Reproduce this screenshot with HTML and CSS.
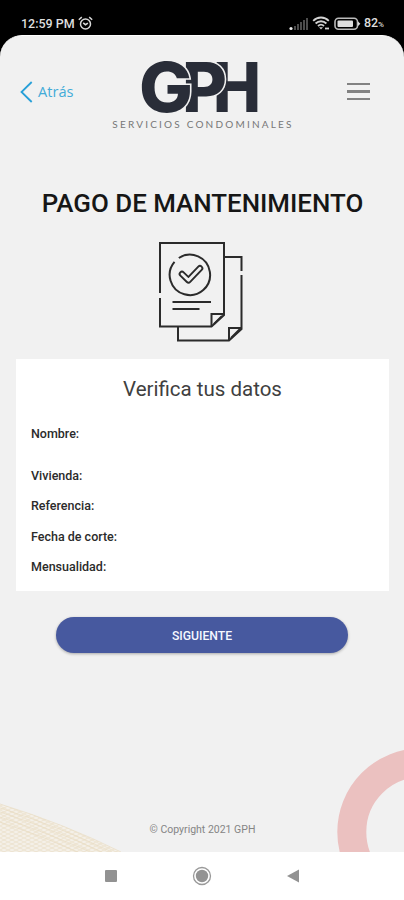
FILE: index.html
```
<!DOCTYPE html>
<html lang="es">

<head>
    <meta charset="UTF-8" />
    <meta name="viewport" content="width=device-width, initial-scale=1.0" />
    <title>GPH - Pago de mantenimiento</title>
    <link rel="stylesheet" href="styles.css">
</head>

<body>
    <div class="status-bar">
        <div class="status-left">
            <span class="time">12:59 PM</span>
            <svg width="15" height="15" viewBox="0 0 15 15" fill="none" stroke="#d8d8d8" stroke-width="1.5">
                <circle cx="7.5" cy="8" r="5" />
                <path d="M5.2 6.8l2.3 1.9 2.4-1.6M.8 3.7l3-2.6M14.2 3.7l-3-2.6" />
            </svg>
        </div>
        <div class="status-right">
            <svg width="20" height="14" viewBox="0 0 20 14">
                <path fill="#4c4c4c" d="M5 9h2v4H5zM8 7h2v6H8zM11 5h2v8h-2zM14 3h2v10h-2zM17 1h2v12h-2z" />
                <circle cx="2" cy="11.5" r="1.6" fill="#eee" />
            </svg>
            <svg width="19" height="15" viewBox="0 0 19 15" fill="none" stroke="#d2d2d2" stroke-width="1.8">
                <path d="M1.2 4.8c4.3-4.4 11.3-4.4 15.6 0M3.6 7.5c3-3 7.8-3 10.8 0M6 10c1.8-1.7 4.2-1.7 6 0" />
                <path d="M7 11.2h4l-2 2.3z" fill="#d2d2d2" stroke="none" />
                <path d="M13 12.5h4" />
            </svg>
            <svg width="27" height="14" viewBox="0 0 27 14">
                <rect x="1" y="1.2" width="22.5" height="11" rx="3.5" fill="none" stroke="#bbb" stroke-width="1.6" />
                <rect x="3.5" y="3.5" width="15.5" height="6.5" rx="1" fill="#dedede" />
                <path d="M24 4.5l2.4 2.3L24 9z" fill="#ddd" />
            </svg>
            <span class="battery">82<small>%</small></span>
        </div>
    </div>

    <div class="app">
        <header>
            <a class="back" href="#">
                <svg width="13" height="22" viewBox="0 0 13 22" fill="none" stroke="#29a0d8" stroke-width="1.8">
                    <path d="M11.7 1L1.5 11l10.2 10" />
                </svg>
                <span>Atrás</span>
            </a>
            <div class="logo">
                <svg width="122" height="55" viewBox="0 0 122 55">
                    <text class="logo-letter" x="74" y="51" textLength="48" lengthAdjust="spacingAndGlyphs">H</text>
                    <text class="logo-letter outlined" x="43" y="51" textLength="45" lengthAdjust="spacingAndGlyphs">P</text>
                    <text class="logo-letter outlined" x="0" y="51" textLength="54" lengthAdjust="spacingAndGlyphs">G</text>
                </svg>
                <div class="logo-caption">SERVICIOS CONDOMINALES</div>
            </div>
            <button class="menu" aria-label="Menú">
                <span></span>
                <span></span>
                <span></span>
            </button>
        </header>

        <main>
            <h1>PAGO DE MANTENIMIENTO</h1>

            <svg class="docs" width="88" height="102" viewBox="0 0 88 102" fill="none" stroke="#2b2b2b" stroke-width="2">
                <path d="M2 52V2h64V74L53.5 85.5H2V57" />
                <path d="M66 73H53.5v12.5M56 83l8-8" />
                <path d="M66 16h17.5V30M83.5 34V88L71 99.5H20V86" />
                <path d="M83.5 87H71v12.5M73 97l9-9" />
                <path d="M20.8 17A20.2 20.2 0 1 1 16.5 20.8" />
                <!-- hollow check mark -->
                <g stroke-linecap="round" stroke-linejoin="round">
                    <path d="M24 33l6.5 6.3 11.5-12" stroke-width="6.6" />
                    <path d="M24 33l6.5 6.3 11.5-12" stroke="#f1f1f1" stroke-width="2.8" />
                </g>
                <path d="M14.5 61H53M14.5 68H41.5" />
            </svg>

            <section class="card">
                <h2>Verifica tus datos</h2>
                <dl>
                    <dt class="name">Nombre:</dt>
                    <dt>Vivienda:</dt>
                    <dt>Referencia:</dt>
                    <dt>Fecha de corte:</dt>
                    <dt>Mensualidad:</dt>
                </dl>
            </section>

            <button class="next">SIGUIENTE</button>
        </main>

        <!-- Background decoration -->
        <svg class="deco-lines" width="122" height="50" viewBox="0 0 122 50" fill="none" stroke="#e8dabf" stroke-width=".6">
            <defs>
                <pattern id="mesh" width="8" height="4" patternUnits="userSpaceOnUse">
                    <rect width="8" height="4" fill="#f4f0e8" stroke="none" />
                    <path d="M0 0l8 4M0 4l8-4" />
                </pattern>
            </defs>
            <path d="M0 2Q65 22 121 50H0z" fill="url(#mesh)" stroke="none" />
            <path d="M0 2Q65 22 121 50M0 6Q60 25 112 50M0 10Q55 28 102 50M0 15Q48 31 90 50M0 20Q40 33 78 50" />
        </svg>
        <svg class="deco-ring" width="67" height="102" viewBox="0 0 67 102">
            <circle cx="84" cy="82" r="69.2" fill="none" stroke="#ebc1c0" stroke-width="29" />
        </svg>

        <footer>© Copyright 2021 GPH</footer>
    </div>

    <nav class="system-nav">
        <svg width="14" height="14" viewBox="0 0 14 14">
            <rect x="1" y="1" width="12" height="12" rx="1" fill="#929292" />
        </svg>
        <svg width="20" height="20" viewBox="0 0 20 20">
            <circle cx="10" cy="10" r="8.5" fill="none" stroke="#999" stroke-width="1.3" />
            <circle cx="10" cy="10" r="6.2" fill="#939393" />
        </svg>
        <svg width="14" height="14" viewBox="0 0 14 14">
            <path d="M1 7l12-6.5v13z" fill="#929292" />
        </svg>
    </nav>
</body>

</html>
```
FILE: styles.css
```
* {
    box-sizing: border-box;
}

body {
    margin: 0;
    height: 900px;
    display: flex;
    flex-direction: column;
    background: #000;
    font-family: Roboto, "Liberation Sans", sans-serif;
    color: #2b2b2b;
    overflow: hidden;
}

button {
    border: none;
    font-family: inherit;
    cursor: pointer;
}

/* Phone status bar */
.status-bar {
    height: 35px;
    padding: 11px 20px 0 21px;
    display: flex;
    justify-content: space-between;
    color: #dedede;
    font-size: 12.5px;
    font-weight: 500;
    line-height: 25px;
}

.status-left,
.status-right {
    height: 25px;
    display: flex;
    align-items: center;
    gap: 3px;
}

.battery small {
    font-size: 8px;
}

/* App screen */
.app {
    position: relative;
    height: 817px;
    display: flex;
    flex-direction: column;
    background: #f1f1f1;
    border-top: 1px solid #fff;
    border-radius: 22px 22px 0 0;
    overflow: hidden;
}

header {
    height: 124px;
    padding: 25px 34px 0 20px;
    display: flex;
    align-items: flex-start;
}

.back {
    width: 92px;
    margin-top: 20px;
    display: flex;
    align-items: center;
    gap: 5px;
    color: #43abd8;
    font-family: "Open Sans", sans-serif;
    font-size: 14.6px;
    line-height: 20px;
    text-decoration: none;
}

.back span {
    padding-bottom: 2px;
}

.logo {
    width: 182px;
    display: flex;
    flex-direction: column;
    align-items: center;
}

.logo svg {
    margin-left: -6px;
    overflow: visible;
}

.logo-letter {
    font-family: Inter, sans-serif;
    font-size: 69px;
    font-weight: 800;
    fill: #292d38;
}

.outlined {
    stroke: #f1f1f1;
    stroke-width: 3px;
    paint-order: stroke;
}

.logo-caption {
    margin-top: 1px;
    font-family: Lato, sans-serif;
    font-size: 10px;
    line-height: 14px;
    letter-spacing: 2.2px;
    white-space: nowrap;
    color: #777;
}

.menu {
    width: 23px;
    margin: 22px 0 0 auto;
    padding: 0;
    display: flex;
    flex-direction: column;
    gap: 5px;
    background: none;
}

.menu span {
    height: 2.4px;
    background: #828282;
}

main {
    display: flex;
    flex-direction: column;
    align-items: center;
}

h1 {
    margin: 27px 0 0 1px;
    font-size: 25.9px;
    font-weight: 500;
    line-height: 32px;
    white-space: nowrap;
    color: #161616;
}

.docs {
    margin: 22px 1px 0 0;
}

.card {
    width: 373px;
    height: 232px;
    margin: 16px 0 0 1px;
    padding: 15px;
    background: #fff;
}

h2 {
    margin: 0;
    font-size: 20.5px;
    font-weight: 400;
    line-height: 30px;
    text-align: center;
    color: #404040;
}

dl {
    margin: 15px 0 0;
}

dt {
    height: 30.4px;
    font-size: 12.5px;
    font-weight: 500;
    line-height: 30px;
}

.name {
    height: 42px;
}

.next {
    width: 292px;
    height: 36px;
    margin-top: 26px;
    padding: 2px 0 0;
    border-radius: 18px;
    background: #47599f;
    box-shadow: 0 1px 3px rgba(0, 0, 0, 0.3);
    color: #f5f7ff;
    font-size: 12.2px;
    font-weight: 500;
}

.deco-lines {
    position: absolute;
    left: 0;
    bottom: 0;
}

.deco-ring {
    position: absolute;
    right: 0;
    bottom: 0;
}

footer {
    margin-top: auto;
    padding: 0 0 14px 1px;
    text-align: center;
    font-size: 10.5px;
    line-height: 16px;
    color: #858585;
}

/* Android navigation buttons */
.system-nav {
    height: 48px;
    display: flex;
    align-items: center;
    justify-content: center;
    gap: 74px;
    background: #fff;
}
```
